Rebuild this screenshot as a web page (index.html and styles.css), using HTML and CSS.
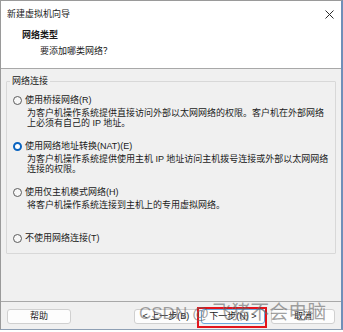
FILE: index.html
```html
<!DOCTYPE html>
<html lang="zh-CN">
<head>
    <meta charset="UTF-8">
    <meta name="viewport" content="width=device-width, initial-scale=1.0">
    <title>新建虚拟机向导</title>
    <link rel="stylesheet" href="styles.css">
</head>
<body>
    <div class="window">
        <div class="titlebar">
            <span class="title">新建虚拟机向导</span>
            <svg class="close" width="9" height="9" viewBox="0 0 9 9">
                <path d="M0.5 0.5 L8.5 8.5 M8.5 0.5 L0.5 8.5" stroke="#2b2b2b" stroke-width="1" fill="none"/>
            </svg>
        </div>

        <div class="header">
            <div class="header-title">网络类型</div>
            <div class="header-sub">要添加哪类网络？</div>
        </div>

        <div class="body">
            <fieldset class="group">
                <legend>网络连接</legend>

                <div class="option">
                    <div class="option-label"><span class="radio"></span>使用桥接网络(R)</div>
                    <div class="option-desc">为客户机操作系统提供直接访问外部以太网网络的权限。客户机在外部网络<br>上必须有自己的 IP 地址。</div>
                </div>

                <div class="option">
                    <div class="option-label"><span class="radio checked"></span>使用网络地址转换(NAT)(E)</div>
                    <div class="option-desc">为客户机操作系统提供使用主机 IP 地址访问主机拨号连接或外部以太网网络<br>连接的权限。</div>
                </div>

                <div class="option">
                    <div class="option-label"><span class="radio"></span>使用仅主机模式网络(H)</div>
                    <div class="option-desc two-lines">将客户机操作系统连接到主机上的专用虚拟网络。</div>
                </div>

                <div class="option">
                    <div class="option-label"><span class="radio"></span>不使用网络连接(T)</div>
                </div>
            </fieldset>
        </div>

        <div class="footer">
            <button class="btn">帮助</button>
            <button class="btn btn-prev">&lt; 上一步(B)</button>
            <button class="btn btn-default">下一步(N) &gt;</button>
            <button class="btn btn-cancel">取消</button>
            <div class="watermark">CSDN @<span class="wm-cjk">飞猪不会电脑</span></div>
        </div>
    </div>
</body>
</html>
```

FILE: styles.css
```css
body {
    margin: 0;
    background-color: #ffffff;
    font-family: "Liberation Sans", "Noto Sans CJK SC", sans-serif;
    font-size: 9px;
    line-height: 10px;
    color: #1a1a1a;
}
.window {
    width: 343px;
    height: 330px;
    box-sizing: border-box;
    border: 1px solid #9a9a9a;
    border-right: 2px solid #6f8fb8;
    border-bottom-color: #8e9fb4;
    background-color: #f0f0f0;
    display: flex;
    flex-direction: column;
}
.titlebar {
    height: 26px;
    background-color: #ffffff;
    display: flex;
    align-items: center;
    justify-content: space-between;
    padding: 0 7px 1px 6px;
}
.close {
    display: block;
}
.header {
    box-sizing: border-box;
    background-color: #ffffff;
    border-bottom: 1px solid #a8a8a8;
    height: 41px;
    padding-top: 2px;
}
.header-title {
    font-weight: bold;
    padding-left: 21px;
}
.header-sub {
    margin-top: 6px;
    padding-left: 39px;
}
.body {
    flex: 1;
    padding: 7px 5px 0 5px;
}
.group {
    margin: 0;
    padding: 9px 0 10px 6px;
    border: 1px solid #d8d8d8;
    border-radius: 1px;
}
.group legend {
    margin-left: -3px;
    padding: 0 2px;
    line-height: 10px;
}
.option + .option {
    margin-top: 13px;
}
.option-label {
    display: flex;
    align-items: center;
    height: 10px;
    white-space: nowrap;
}
.option-desc {
    margin-top: 3px;
    padding-left: 14px;
    white-space: nowrap;
}
.option-desc.two-lines {
    min-height: 20px;
}
.radio {
    width: 7px;
    height: 7px;
    border: 1px solid #5c5c5c;
    border-radius: 50%;
    background-color: #f7f7f7;
    margin-right: 3px;
    flex: none;
}
.radio.checked {
    width: 5px;
    height: 5px;
    border: 2.5px solid #0a64c0;
    background-color: #ffffff;
}
.footer {
    position: relative;
    height: 28px;
    box-sizing: border-box;
    border-top: 1px solid #a8a8a8;
    display: flex;
    align-items: flex-start;
    padding: 7px 6px 0 6px;
}
.btn {
    width: 64px;
    height: 15px;
    padding: 0;
    margin: 0;
    border: 1px solid #d0d0d0;
    border-radius: 3px;
    background-color: #fdfdfd;
    font-family: "Liberation Sans", "Noto Sans CJK SC", sans-serif;
    font-size: 9px;
    line-height: 13px;
    color: #1a1a1a;
}
.btn-prev {
    margin-left: auto;
}
.btn-default {
    position: relative;
    margin-left: 3px;
    border-color: #6aa6dc;
}
.btn-default::after {
    content: "";
    position: absolute;
    top: -3px;
    left: -5px;
    right: -3px;
    bottom: -5px;
    border: 2px solid #e3141c;
}
.btn-cancel {
    margin-left: 6px;
}
.watermark {
    position: absolute;
    left: 138px;
    top: 0;
    font-size: 17px;
    line-height: 22px;
    color: rgba(100, 100, 100, 0.6);
    white-space: nowrap;
    pointer-events: none;
}
.wm-cjk {
    font-size: 19px;
    margin-left: 3px;
}
```
